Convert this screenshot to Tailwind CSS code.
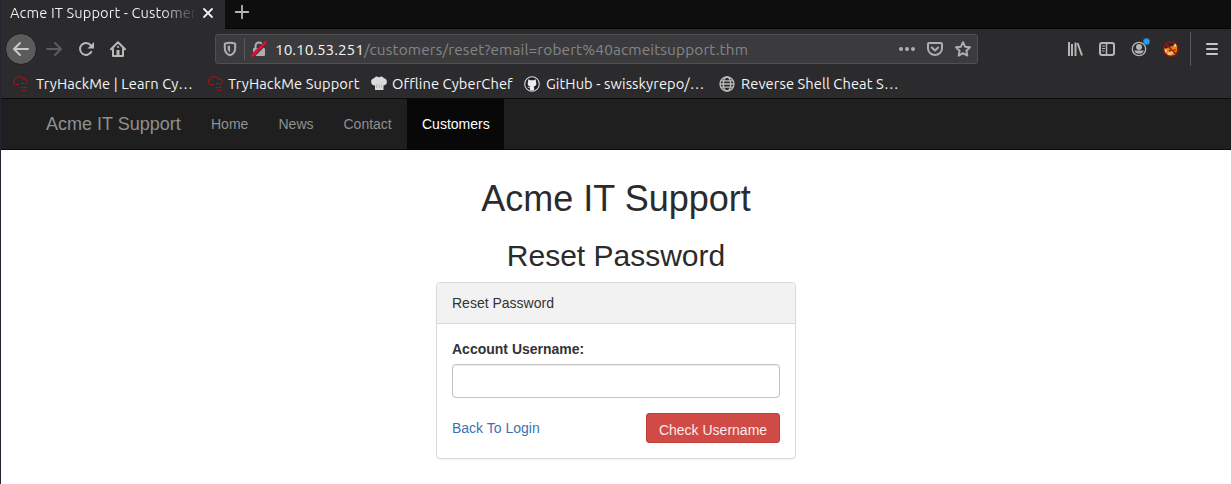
<!DOCTYPE html>
<html lang="en">
<head>
<meta charset="utf-8">
<title>Acme IT Support - Customers</title>
<script src="https://cdn.jsdelivr.net/npm/@tailwindcss/browser@4"></script>
</head>
<body class="h-[484px] overflow-hidden border-l border-[#23242f] bg-white font-['Liberation_Sans',sans-serif] text-sm text-[#333]">
<div class="bg-[#2b2b2d] font-['Ubuntu','Noto_Sans',sans-serif] text-[14.667px] text-[#f4f4f4]">
  <!-- tab strip -->
  <div class="flex h-[29px] bg-[#0e0e0e]">
    <div class="flex w-[224px] items-center bg-[#2b2b2d] pl-[9px] pb-[3px]">
      <div class="w-[186px] overflow-hidden bg-linear-to-r from-[#f4f4f4] from-82% to-[#343436] bg-clip-text whitespace-nowrap text-transparent tracking-[0.1px]">Acme IT Support - Customer</div>
      <svg class="ml-[6px] size-3 shrink-0" viewBox="0 0 12 12" fill="none" stroke="#f0f0f0" stroke-width="1.8" stroke-linecap="round"><path d="M2 2l8 8M10 2l-8 8"/></svg>
    </div>
    <div class="flex flex-1 items-start border-b border-[#060606] pt-[4px] pl-[9px]">
      <svg class="size-4" viewBox="0 0 16 16" fill="none" stroke="#b5b5b5" stroke-width="1.8" stroke-linecap="round"><path d="M8 1.700v12.600M1.700 8h12.600"/></svg>
    </div>
  </div>
  <!-- toolbar -->
  <div class="flex h-10 items-center">
    <div class="ml-1 flex size-8 items-center justify-center rounded-full border border-[#1d1d1e] bg-[#5b5b5c]">
      <svg class="size-4" viewBox="0 0 16 16" fill="none" stroke="#c8c8c8" stroke-width="2" stroke-linecap="round" stroke-linejoin="round"><path d="M15 8H1.500M7 2L1 8l6 6"/></svg>
    </div>
    <svg class="ml-[9px] size-4" viewBox="0 0 16 16" fill="none" stroke="#5c5c5e" stroke-width="2" stroke-linecap="round" stroke-linejoin="round"><path d="M1 8h13.500M9 2l6 6-6 6"/></svg>
    <svg class="ml-4 size-4" viewBox="0 0 16 16" fill="none" stroke="#b9b9b9" stroke-width="2" stroke-linecap="round"><path d="M13.300 10.800A6 6 0 1 1 12.600 4"/><path d="M16 1v6.500H9.500z" fill="#b9b9b9" stroke="none"/></svg>
    <svg class="ml-4 size-4" viewBox="0 0 16 16" fill="none" stroke="#b9b9b9" stroke-width="2" stroke-linecap="round" stroke-linejoin="round"><path d="M1 8.200L8 1.300l7 6.900M3 8v7h10V8"/><path d="M6.500 9h3v6h-3z" fill="#b9b9b9" stroke="none"/><path d="M8 6h.1"/></svg>
    <div class="ml-[89px] flex h-[30px] w-[763px] shrink-0 items-center rounded-[3px] border border-[#505052] bg-[#3b3b3d] text-[#858587]">
      <svg class="ml-[6px] size-4" viewBox="0 0 16 16" fill="none" stroke="#aeaeaf" stroke-width="2" stroke-linejoin="round"><path d="M8 1.800c-2 0-3.500.4-5.200 1v4.400c0 3.800 2 6 5.200 7.100 3.200-1.100 5.200-3.300 5.200-7.100V2.800C11.500 2.200 10 1.800 8 1.800z"/><path d="M8 4.500v7C6.300 10.300 5.700 9 5.700 7V5z" fill="#aeaeaf" stroke="none"/></svg>
      <div class="ml-[6px] h-[22px] w-px bg-[#565b65]"></div>
      <svg class="ml-[6px] size-4" viewBox="0 0 16 16" fill="none"><path d="M4.500 8V5a3.500 3.500 0 0 1 7 0v3" stroke="#aeaeaf" stroke-width="2"/><rect x="2" y="7" width="12" height="8" rx="1" fill="#aeaeaf"/><path d="M1 15.500L15 1.500" stroke="#3b3b3d" stroke-width="4"/><path d="M1.300 14.700L14.700 1.300" stroke="#f20a3c" stroke-width="2" stroke-linecap="round"/></svg>
      <div class="ml-[8px] w-[619px] pt-[2px] text-[15.4px] whitespace-nowrap"><span class="tracking-[-0.05px] text-[#f4f4f4]">10.10.53.251</span><span class="tracking-[0.12px]">/customers/reset?email=robert%40acmeitsupport.thm</span></div>
      <svg class="ml-[5px] size-4 shrink-0" viewBox="0 0 16 16" fill="#aeaeaf"><circle cx="2" cy="8" r="2"/><circle cx="8" cy="8" r="2"/><circle cx="14" cy="8" r="2"/></svg>
      <svg class="ml-3 size-4 shrink-0" viewBox="0 0 16 16" fill="none" stroke="#aeaeaf" stroke-width="2" stroke-linecap="round" stroke-linejoin="round"><path d="M2 2h12q1 0 1 1v4.500a7 6.500 0 0 1-14 0V3q0-1 1-1z"/><path d="M4.800 6.500L8 9.500l3.200-3"/></svg>
      <svg class="ml-3 size-4 shrink-0" viewBox="0 0 16 16" fill="none" stroke="#aeaeaf" stroke-width="2" stroke-linejoin="round"><path d="M8 1.200l2.100 4.500 4.900.6-3.600 3.400.9 4.900L8 12.200l-4.300 2.400.9-4.900L1 6.300l4.900-.6z"/></svg>
    </div>
    <svg class="ml-[89px] size-4 shrink-0" viewBox="0 0 16 16" fill="none" stroke="#b5b5b5" stroke-width="2"><path d="M2 1v14M5 3v12M8.500 1.500V15"/><path d="M10.500 2L15 14.500"/></svg>
    <svg class="ml-4 size-4 shrink-0" viewBox="0 0 16 16" fill="none" stroke="#b5b5b5"><rect x="1" y="2" width="14" height="12" rx="2" stroke-width="2"/><path d="M7.500 2v12" stroke-width="1.500"/><path d="M3 5h3M3 7.500h3M3 10h2.500"/></svg>
    <div class="relative ml-4 size-4 shrink-0">
      <svg class="size-4" viewBox="0 0 16 16"><circle cx="8" cy="8" r="6.700" fill="none" stroke="#b5b5b5" stroke-width="1.300"/><circle cx="8" cy="6" r="3" fill="#b5b5b5"/><path d="M3.200 9.500h9.600c-.8 2.200-2.600 3.300-4.800 3.300s-4-1.100-4.800-3.300z" fill="#b5b5b5"/></svg>
      <div class="absolute -top-[2px] left-[13px] size-[5px] rounded-full bg-[#2f9df4] ring-1 ring-[#2674b0]"></div>
    </div>
    <svg class="ml-4 size-4 shrink-0" viewBox="0 0 16 16"><path d="M1 7l2 .500L6 6l4-1 2-3 2 4v4l-2 4-5 1-5-3z" fill="#e5830d"/><path d="M1 8l3 1-1 3zM12 2l2 3-3 1z" fill="#f1d8c8"/><path d="M4 12l4-2 3 1-3 3-3 .500z" fill="#f0c07a"/><path d="M6 9h2v1.500H6zM11 8h1.500v1.500H11z" fill="#55320c"/><circle cx="8" cy="8" r="7.300" fill="none" stroke="#b40d0d" stroke-width="1.100"/><path d="M3 3l10 10" stroke="#b40d0d" stroke-width="1.500"/></svg>
    <div class="ml-[11px] h-[34px] w-px bg-[#59595b]"></div>
    <svg class="ml-[13px] size-4 shrink-0" viewBox="0 0 16 16" stroke="#c5c5c5" stroke-width="2" stroke-linecap="round"><path d="M3 3h10M3 8h10M3 13h10"/></svg>
  </div>
  <!-- bookmarks -->
  <div class="flex h-[29px] items-center pt-px tracking-[0.1px] whitespace-nowrap">
    <svg class="ml-[11px] size-4 shrink-0" viewBox="0 0 16 16" fill="none" stroke="#a51519" stroke-width="1"><path d="M7 8.500H3.500a3 3 0 0 1-.3-5.500A4.200 4.200 0 0 1 11 3a3 3 0 0 1 3.500 4.700L13 8.500M9 7.500h3M9 11.500h2M12 11.500h3M10.500 14.500h3"/></svg>
    <span class="ml-2 w-[171px]">TryHackMe | Learn Cy…</span>
    <svg class="size-4 shrink-0" viewBox="0 0 16 16" fill="none" stroke="#a51519" stroke-width="1"><path d="M7 8.500H3.500a3 3 0 0 1-.3-5.500A4.200 4.200 0 0 1 11 3a3 3 0 0 1 3.500 4.700L13 8.500M9 7.500h3M9 11.500h2M12 11.500h3M10.500 14.500h3"/></svg>
    <span class="ml-[5px] w-[143px]">TryHackMe Support</span>
    <svg class="size-4 shrink-0" viewBox="0 0 16 16"><path d="M4 14V9.500A3.700 3.700 0 0 1 3 2.200 3.500 3.500 0 0 1 8 1.500a3.500 3.500 0 0 1 5 .700A3.700 3.700 0 0 1 12.500 9.500V14z" fill="#dadada"/><path d="M5.500 8.500V12M8 8v4M10.500 8.500V12" stroke="#b5b5b5"/></svg>
    <span class="ml-[5px] w-[133px]">Offline CyberChef</span>
    <svg class="-ml-px size-4 shrink-0" viewBox="0 0 16 16"><circle cx="8" cy="8" r="7.300" fill="#1d1e22" stroke="#d6d6d6" stroke-width="1.100"/><path d="M4.300 3.200l2 1.100h3.400l2-1.100.3 2.500c1 2.300 0 4.600-2.300 5 .5.700.5 2 .3 3.800H6v-2.300c-1.500.2-1.800-.8-2.800-1.400 1.300-.2 1.500 1 2.800.5l.3-.600C4 10.300 3 8 4 5.700z" fill="#ececec"/></svg>
    <span class="ml-[6px] w-[173px]">GitHub - swisskyrepo/…</span>
    <svg class="size-4 shrink-0" viewBox="0 0 16 16" fill="none" stroke="#bdbdbd" stroke-width="1.300"><circle cx="8" cy="8" r="7"/><ellipse cx="8" cy="8" rx="3.700" ry="7"/><path d="M2 4.800h12M1 8h14M2 11.200h12"/></svg>
    <span class="ml-[6px]">Reverse Shell Cheat S…</span>
  </div>
</div>
<!-- site navigation -->
<nav class="flex h-[52px] items-stretch border-y border-t-[#0b0b0b] border-b-[#080808] bg-[#1f1f1f] pl-[30px] leading-5 text-[#909090]">
  <a class="w-[165px] p-[15px] text-lg leading-5">Acme IT Support</a>
  <a class="w-[67.5px] p-[15px]">Home</a>
  <a class="w-[65px] p-[15px]">News</a>
  <a class="w-[78.5px] p-[15px]">Contact</a>
  <a class="w-[97px] bg-[#080808] p-[15px] text-white">Customers</a>
</nav>
<main class="flex flex-col items-center pt-[29px]">
  <h1 class="text-[36px] leading-[40px] text-[#2b2b2b]">Acme IT Support</h1>
  <h2 class="mt-[20px] mb-[10px] text-[30px] leading-[33px] text-[#2b2b2b]">Reset Password</h2>
  <section class="w-[360px] rounded-[4px] border border-[#d8d8d8] bg-white leading-5 shadow-[0_1px_1px_rgba(0,0,0,0.05)]">
    <div class="rounded-t-[3px] border-b border-[#d8d8d8] bg-[#f2f2f2] px-[15px] py-[10px]">Reset Password</div>
    <div class="p-[15px]">
      <label class="mb-[5px] block font-bold">Account Username:</label>
      <input class="block h-[34px] w-full rounded-[4px] border border-[#c2c2c2] shadow-[inset_0_1px_1px_rgba(0,0,0,0.075)]">
      <div class="mt-[15px] flex h-[30px] items-center justify-between">
        <a class="text-[#3a73b2]">Back To Login</a>
        <button class="h-[30px] w-[134px] rounded-[3px] border border-[#c43c38] bg-[#d04a46] pt-[3px] text-sm text-[#fbeaea]">Check Username</button>
      </div>
    </div>
  </section>
</main>
</body>
</html>
